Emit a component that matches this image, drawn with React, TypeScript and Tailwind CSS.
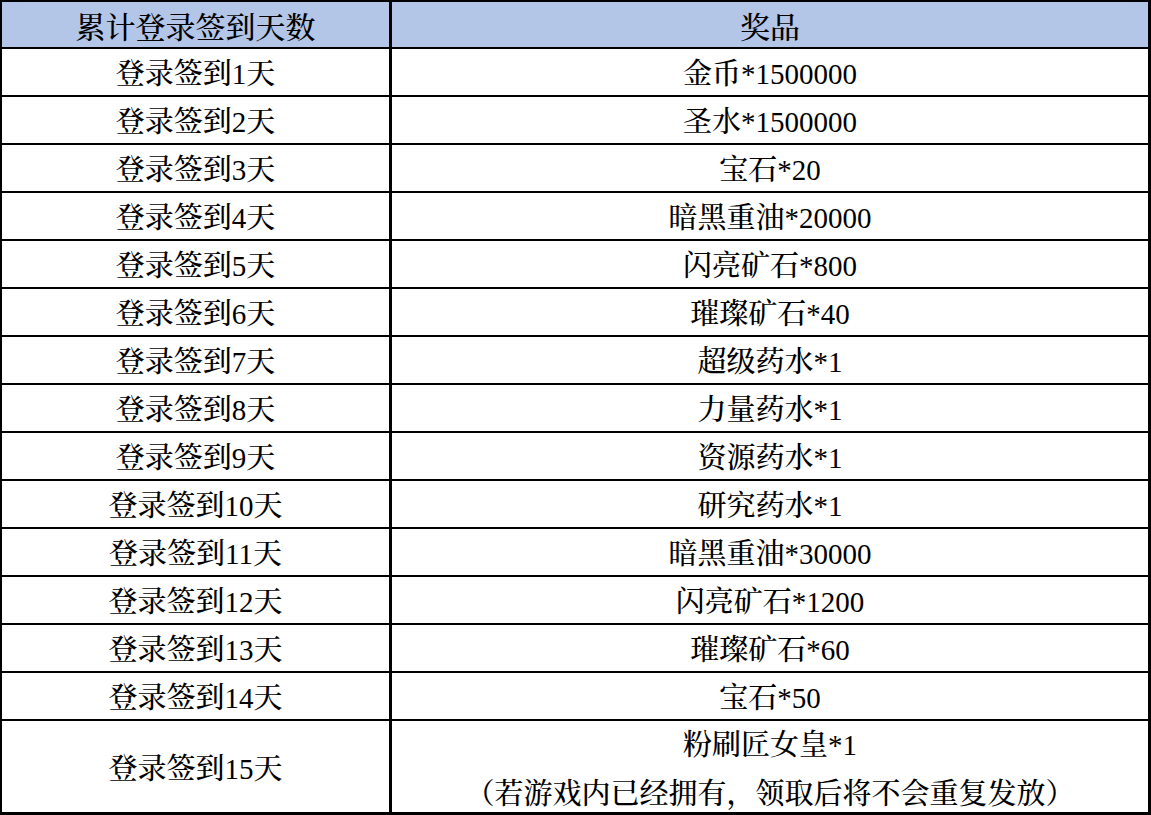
import React from "react";

const rows: [string, string][] = [
  ["登录签到1天", "金币*1500000"],
  ["登录签到2天", "圣水*1500000"],
  ["登录签到3天", "宝石*20"],
  ["登录签到4天", "暗黑重油*20000"],
  ["登录签到5天", "闪亮矿石*800"],
  ["登录签到6天", "璀璨矿石*40"],
  ["登录签到7天", "超级药水*1"],
  ["登录签到8天", "力量药水*1"],
  ["登录签到9天", "资源药水*1"],
  ["登录签到10天", "研究药水*1"],
  ["登录签到11天", "暗黑重油*30000"],
  ["登录签到12天", "闪亮矿石*1200"],
  ["登录签到13天", "璀璨矿石*60"],
  ["登录签到14天", "宝石*50"],
];

function T({ s }: { s: string }) {
  const parts = s.match(/[\x20-\x7e]+|[^\x20-\x7e]+/g) || [];
  return (
    <span>
      {parts.map((p, i) =>
        /^[\x20-\x7e]+$/.test(p) ? (
          <span key={i} className="font-['Liberation_Serif',serif]">
            {p}
          </span>
        ) : (
          <span key={i} className="font-['Noto_Serif_CJK_SC','Noto_Sans_CJK_SC',serif] font-medium">
            {p}
          </span>
        )
      )}
    </span>
  );
}

export default function App() {
  return (
    <div className="w-[1151px] h-[815px] bg-white text-black">
      <div className="flex flex-col border-l-2 border-t-2 border-r-[3px] border-b-[3px] border-black">
        <div className="grid grid-cols-[390px_1fr] h-[47px] border-b-2 border-black bg-[#b4c6e7] text-[30px] leading-none">
          <div className="flex items-center justify-center border-r-[3px] border-black pt-[2px]">
            <T s="累计登录签到天数" />
          </div>
          <div className="flex items-center justify-center pt-[2px]">
            <T s="奖品" />
          </div>
        </div>
        {rows.map(([a, b]) => (
          <div key={a} className="grid grid-cols-[390px_1fr] h-[48px] border-b-2 border-black text-[29px] leading-none">
            <div className="flex items-center justify-center border-r-[3px] border-black pt-[2px]">
              <T s={a} />
            </div>
            <div className="flex items-center justify-center pt-[2px]">
              <T s={b} />
            </div>
          </div>
        ))}
        <div className="grid grid-cols-[390px_1fr] h-[91px] text-[29px] leading-none">
          <div className="flex items-center justify-center border-r-[3px] border-black pt-[2px]">
            <T s="登录签到15天" />
          </div>
          <div className="flex flex-col items-center justify-center gap-[17px] pt-[2px]">
            <T s="粉刷匠女皇*1" />
            <T s="（若游戏内已经拥有，领取后将不会重复发放）" />
          </div>
        </div>
      </div>
    </div>
  );
}
